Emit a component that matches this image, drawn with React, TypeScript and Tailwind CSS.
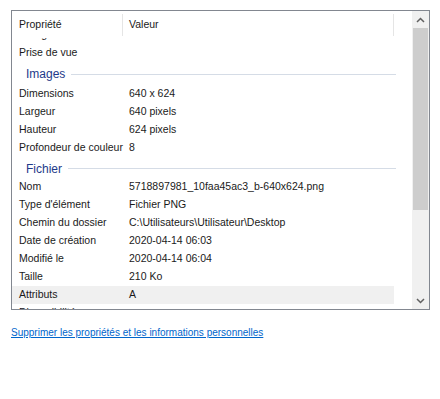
import React from 'react';

type Row = { label: string; value?: string; group?: boolean; selected?: boolean };

const rows: Row[] = [
    { label: 'Catégorie' },
    { label: 'Prise de vue' },
    { label: 'Images', group: true },
    { label: 'Dimensions', value: '640 x 624' },
    { label: 'Largeur', value: '640 pixels' },
    { label: 'Hauteur', value: '624 pixels' },
    { label: 'Profondeur de couleur', value: '8' },
    { label: 'Fichier', group: true },
    { label: 'Nom', value: '5718897981_10faa45ac3_b-640x624.png' },
    { label: "Type d'élément", value: 'Fichier PNG' },
    { label: 'Chemin du dossier', value: 'C:\\Utilisateurs\\Utilisateur\\Desktop' },
    { label: 'Date de création', value: '2020-04-14 06:03' },
    { label: 'Modifié le', value: '2020-04-14 06:04' },
    { label: 'Taille', value: '210 Ko' },
    { label: 'Attributs', value: 'A', selected: true },
    { label: 'Disponibilité' },
];

const PropRow: React.FC<{ row: Row; index: number }> = ({ row, index }) => {
    if (row.group) {
        return (
            <div className={`flex items-center shrink-0 pl-[14px] pr-[16px] ${row.label === 'Images' ? 'h-[23px] pt-[1px]' : 'h-[21px] pt-[2px]'}`}>
                <span className="text-[12px] text-[#1e3a8a] leading-none">{row.label}</span>
                <div className="flex-1 h-px bg-[#d5dce6] ml-[6px]" />
            </div>
        );
    }
    return (
        <div
            className={`flex items-center h-[18px] w-[382px] shrink-0 ${row.selected ? 'bg-[#f0f0f0]' : ''} ${index === 0 ? '-mt-[12px]' : ''}`}
        >
            <span className="w-[117px] pl-[7px] whitespace-nowrap">{row.label}</span>
            <span className="whitespace-nowrap">{row.value}</span>
        </div>
    );
};

const App: React.FC = () => {
    return (
        <div className="w-[440px] h-[399px] bg-white pt-[10px] pl-[11px] text-[10.5px] text-[#1a1a1a]" style={{ fontFamily: '"Liberation Sans", Arial, sans-serif' }}>
            <div className="w-[419px] h-[300px] border border-[#828790] flex">
                {/* list */}
                <div className="flex-1 flex flex-col overflow-hidden">
                    <div className="h-[27px] shrink-0 flex items-center relative z-10 bg-white pt-[1px]">
                        <span className="w-[110px] pl-[7px]">Propriété</span>
                        <div className="w-px h-[22px] bg-[#e5e5e5] mr-[6px]" />
                        <span className="w-[264px]">Valeur</span>
                        <div className="w-px h-[22px] bg-[#e5e5e5]" />
                    </div>
                    <div className="flex-1 flex flex-col overflow-hidden">
                        {rows.map((r, i) => (
                            <PropRow key={r.label} row={r} index={i} />
                        ))}
                    </div>
                </div>
                {/* scrollbar */}
                <div className="w-[17px] bg-[#f0f0f0] flex flex-col items-center">
                    <div className="h-[17px] w-full flex items-center justify-center">
                        <svg width="9" height="6" viewBox="0 0 9 6">
                            <path d="M1 5 L4.5 1.5 L8 5" stroke="#606060" strokeWidth="1.5" fill="none" />
                        </svg>
                    </div>
                    <div className="w-[15px] h-[182px] bg-[#cdcdcd]" />
                    <div className="flex-1" />
                    <div className="h-[17px] w-full flex items-center justify-center">
                        <svg width="9" height="6" viewBox="0 0 9 6">
                            <path d="M1 1 L4.5 4.5 L8 1" stroke="#606060" strokeWidth="1.5" fill="none" />
                        </svg>
                    </div>
                </div>
            </div>
            <div className="mt-[15px] text-[10px]">
                <a href="#" className="text-[#0066cc] underline underline-offset-1">
                    Supprimer les propriétés et les informations personnelles
                </a>
            </div>
        </div>
    );
};

export default App;
